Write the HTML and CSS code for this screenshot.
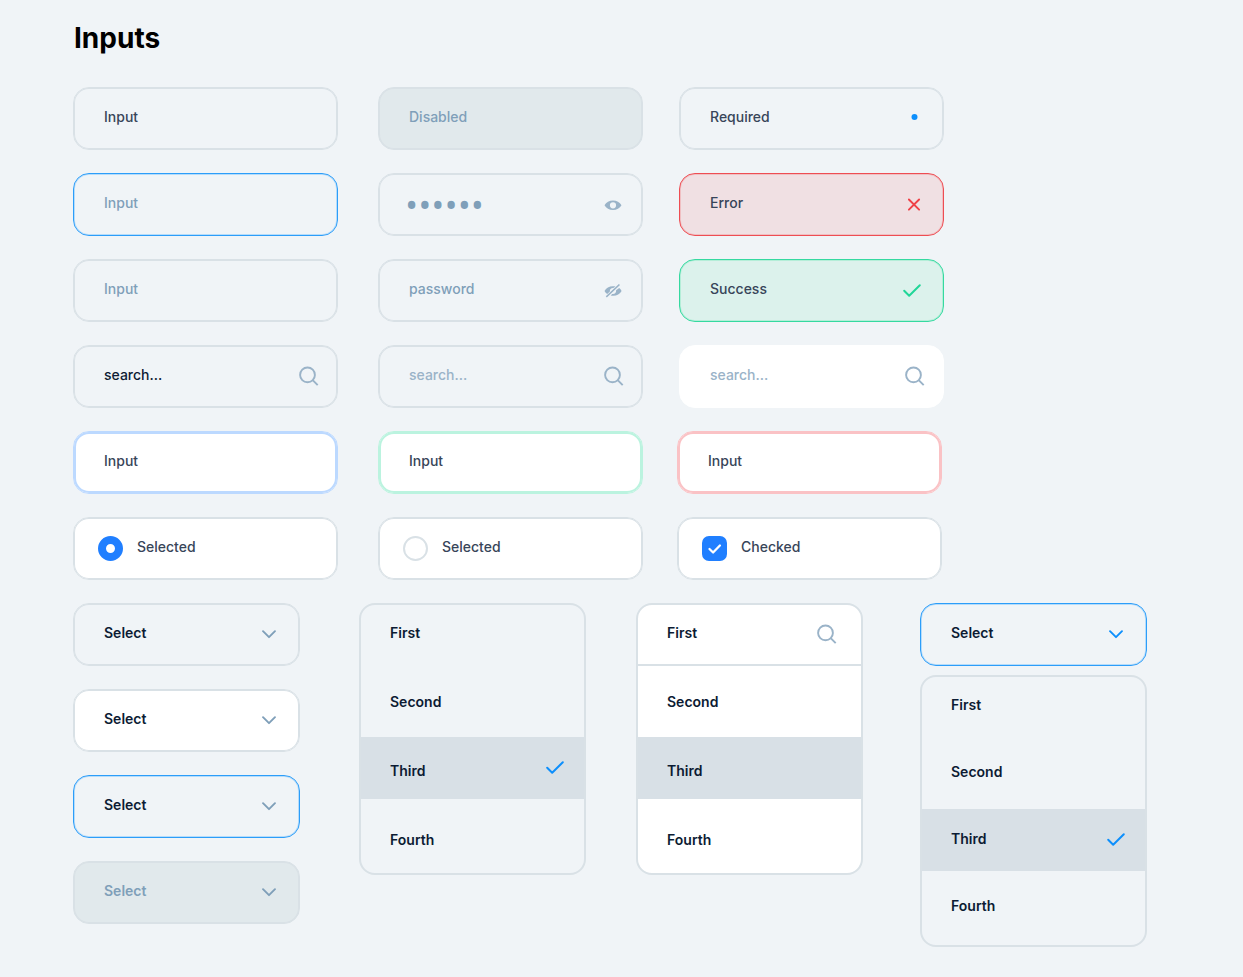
FILE: index.html
```html
<!DOCTYPE html>
<html lang="en">
<head>
<meta charset="utf-8">
<meta name="viewport" content="width=device-width, initial-scale=1">
<title>Inputs</title>
<link rel="stylesheet" href="styles.css">
</head>
<body>
<svg class="sprite" aria-hidden="true">
  <symbol id="search" viewBox="0 0 24 24"><circle cx="11.500" cy="9.900" r="7.400" fill="none" stroke="currentColor" stroke-width="1.900"/><path d="M16.700 15.100l5 5" fill="none" stroke="currentColor" stroke-width="1.900"/></symbol>
  <symbol id="eye" viewBox="0 0 24 24"><path fill="currentColor" fill-rule="evenodd" d="M3.500 12.300C5.200 9.200 8.300 7.500 12 7.500s6.800 1.700 8.500 4.800c-1.700 3.100-4.800 4.800-8.500 4.800S5.200 15.400 3.500 12.300zM12 9.200a3.100 3.100 0 1 0 0 6.200 3.100 3.100 0 0 0 0-6.200z"/></symbol>
  <symbol id="eye-off" viewBox="0 0 24 24"><path fill="currentColor" d="M14.500 7.500C9.800 6.400 5.500 8.200 3.500 12c.7 1.300 1.600 2.300 2.700 3.100l2.700-2.700c-.3-2.200 1.300-3.700 3.400-3.500zM18.200 9.100c1 .7 1.800 1.700 2.400 2.900-2 3.800-6.200 5.500-10.900 4.500l1.500-1.500c2.500.4 4.200-1.400 3.900-3.700zM17.900 5.100l1.100 1-13.200 12.300-1-1.100z"/><path d="M10.300 13.300l3.500-3.500" stroke="currentColor" stroke-width="1"/></symbol>
  <symbol id="cross" viewBox="0 0 24 24"><path d="M6.900 6.500l10.200 10.200M17.100 6.500L6.900 16.700" fill="none" stroke="currentColor" stroke-width="1.900" stroke-linecap="round"/></symbol>
  <symbol id="check" viewBox="0 0 24 24"><path d="M2.200 11.700l5 5L17.800 6.200" fill="none" stroke="currentColor" stroke-width="2" stroke-linecap="round" stroke-linejoin="round"/></symbol>
  <symbol id="dot" viewBox="0 0 24 24"><circle cx="12.500" cy="10" r="3" fill="currentColor"/></symbol>
  <symbol id="chevron" viewBox="0 0 24 24"><path d="M6 9.200l6 6 6-6" fill="none" stroke="currentColor" stroke-width="1.900" stroke-linecap="round" stroke-linejoin="round"/></symbol>
</svg>

<main class="page">
  <h1 class="title">Inputs</h1>

  <div class="fields">
    <div class="field"><input class="control" type="text" value="Input" aria-label="Default"></div>
    <div class="field field--disabled"><input class="control" type="text" placeholder="Disabled" aria-label="Disabled" disabled></div>
    <div class="field"><input class="control" type="text" value="Required" aria-label="Required" required><svg class="icon icon--blue"><use href="#dot"/></svg></div>

    <div class="field field--focus"><input class="control" type="text" placeholder="Input" aria-label="Focused"></div>
    <div class="field"><input class="control control--password" type="password" value="secret" aria-label="Hidden password"><button class="icon-button" type="button" aria-label="Show password"><svg class="icon"><use href="#eye"/></svg></button></div>
    <div class="field field--error"><input class="control" type="text" value="Error" aria-label="Error" aria-invalid="true"><svg class="icon icon--red"><use href="#cross"/></svg></div>

    <div class="field"><input class="control" type="text" placeholder="Input" aria-label="Empty"></div>
    <div class="field"><input class="control" type="text" placeholder="password" aria-label="Visible password"><button class="icon-button" type="button" aria-label="Hide password"><svg class="icon"><use href="#eye-off"/></svg></button></div>
    <div class="field field--success"><input class="control" type="text" value="Success" aria-label="Success"><svg class="icon icon--green"><use href="#check"/></svg></div>

    <div class="field"><input class="control control--dark" type="text" value="search..." aria-label="Search"><svg class="icon"><use href="#search"/></svg></div>
    <div class="field field--search"><input class="control" type="text" placeholder="search..." aria-label="Search, outlined"><svg class="icon"><use href="#search"/></svg></div>
    <div class="field field--search field--white field--plain"><input class="control" type="text" placeholder="search..." aria-label="Search, filled"><svg class="icon"><use href="#search"/></svg></div>
  </div>

  <div class="fields fields--filled">
    <div class="field field--white field--ring-blue"><input class="control" type="text" value="Input" aria-label="Blue ring"></div>
    <div class="field field--white field--ring-green"><input class="control" type="text" value="Input" aria-label="Green ring"></div>
    <div class="field field--white field--ring-red"><input class="control" type="text" value="Input" aria-label="Red ring"></div>

    <label class="field field--white field--choice"><input class="radio" type="radio" name="choice" checked><span class="choice-text">Selected</span></label>
    <label class="field field--white field--choice"><input class="radio" type="radio" name="choice"><span class="choice-text">Selected</span></label>
    <label class="field field--white field--choice"><span class="checkbox-wrap"><input class="checkbox" type="checkbox" checked><svg class="tick" viewBox="0 0 25 25"><path d="M7.500 13l3.600 3.500 6.800-7" fill="none" stroke="currentColor" stroke-width="2.300" stroke-linecap="round" stroke-linejoin="round"/></svg></span><span class="choice-text">Checked</span></label>
  </div>

  <div class="menus">
    <div class="stack">
      <div class="field field--select"><select class="control control--dark" aria-label="Select, outlined"><option>Select</option></select><svg class="icon chevron"><use href="#chevron"/></svg></div>
      <div class="field field--select field--white"><select class="control control--dark" aria-label="Select, filled"><option>Select</option></select><svg class="icon chevron"><use href="#chevron"/></svg></div>
      <div class="field field--select field--focus"><select class="control control--dark" aria-label="Select, focused"><option>Select</option></select><svg class="icon chevron"><use href="#chevron"/></svg></div>
      <div class="field field--select field--disabled"><select class="control" aria-label="Select, disabled" disabled><option>Select</option></select><svg class="icon chevron"><use href="#chevron"/></svg></div>
    </div>

    <div class="list" role="listbox" aria-label="Options">
      <button class="option" type="button" role="option" aria-selected="false"><span class="option-text">First</span></button>
      <button class="option" type="button" role="option" aria-selected="false"><span class="option-text">Second</span></button>
      <button class="option option--active" type="button" role="option" aria-selected="true"><span class="option-text">Third</span><svg class="icon icon--blue"><use href="#check"/></svg></button>
      <button class="option" type="button" role="option" aria-selected="false"><span class="option-text">Fourth</span></button>
    </div>

    <div class="list list--white">
      <div class="list-search"><input class="control control--dark" type="text" value="First" aria-label="Search options"><svg class="icon"><use href="#search"/></svg></div>
      <button class="option" type="button"><span class="option-text">Second</span></button>
      <button class="option option--active" type="button"><span class="option-text">Third</span></button>
      <button class="option" type="button"><span class="option-text">Fourth</span></button>
    </div>

    <div class="dropdown">
      <div class="field field--select field--focus"><select class="control control--dark" aria-label="Select, open"><option>Select</option></select><svg class="icon icon--blue chevron"><use href="#chevron"/></svg></div>
      <div class="list list--compact" role="listbox" aria-label="Open options">
        <button class="option" type="button" role="option" aria-selected="false"><span class="option-text">First</span></button>
        <button class="option" type="button" role="option" aria-selected="false"><span class="option-text">Second</span></button>
        <button class="option option--active" type="button" role="option" aria-selected="true"><span class="option-text">Third</span><svg class="icon icon--blue"><use href="#check"/></svg></button>
        <button class="option" type="button" role="option" aria-selected="false"><span class="option-text">Fourth</span></button>
      </div>
    </div>
  </div>
</main>
</body>
</html>
```

FILE: styles.css
```css
:root {
  --bg: #f0f4f7;
  --line: #d9e1e6;
  --text: #384559;
  --dark: #0c1b33;
  --muted: #7f9fb9;
  --soft: #9ab3c8;
  --blue: #0d8ffc;
}

* { box-sizing: border-box; }

body {
  margin: 0;
  background: var(--bg);
  color: var(--text);
  font: 500 14px/20px Inter, "Liberation Sans", sans-serif;
}

.sprite {
  position: absolute;
  width: 0;
  height: 0;
}

.page { padding: 20px 24px 30px 73px; }

.title {
  margin: 0 0 31px 1px;
  color: #000;
  font-size: 28px;
  font-weight: 700;
  line-height: 36px;
}

.fields {
  display: grid;
  grid-template-columns: 281fr 277fr 265fr;
  gap: 23px 24px;
  max-width: 871px;
  margin-bottom: 23px;
}

.fields--filled {
  grid-template-columns: 281fr 275fr 265fr;
  max-width: 869px;
}

.field {
  position: relative;
  display: flex;
  align-items: center;
  width: 100%;
  max-width: 265px;
  height: 63px;
  padding-right: 17px;
  border: 1px solid var(--line);
  border-radius: 16px;
  box-shadow: inset 0 0 0 1px var(--line);
}

.field--white { background: #fff; }
.field--plain { border-color: #fff; box-shadow: none; }
.field--disabled { background: #e1e9ec; }
.field--focus { border-color: #2c9df9; box-shadow: inset 0 0 0 1px #b5dcfa; }
.field--error { background: #f0e0e3; border-color: #ee4d53; box-shadow: inset 0 0 0 1px #f0bfc2; }
.field--success { background: #dcf2ec; border-color: #35d9a0; box-shadow: inset 0 0 0 1px #b4eed8; }
.field--ring-blue { border-color: #bcd9ff; box-shadow: inset 0 0 0 2px #bcd9ff; }
.field--ring-green { border-color: #bbf3df; box-shadow: inset 0 0 0 2px #bbf3df; }
.field--ring-red { border-color: #fac2c5; box-shadow: inset 0 0 0 2px #fac2c5; }

.control {
  flex: 1;
  min-width: 0;
  height: 100%;
  margin: 0;
  padding: 0 0 4px 30px;
  border: 0;
  outline: 0;
  background: none;
  color: var(--text);
  font: inherit;
  opacity: 1;
  appearance: none;
}

.control::placeholder { color: var(--muted); opacity: 1; }
.control:disabled { color: var(--muted); }
.control--dark { color: var(--dark); }
.field--search .control::placeholder { color: var(--soft); }

.control--password {
  padding: 0 0 0 26px;
  color: var(--muted);
  font-family: "Open Sans", sans-serif;
  font-size: 35px;
}

.icon {
  display: block;
  flex: none;
  width: 24px;
  height: 24px;
  color: var(--soft);
}

.icon--blue { color: var(--blue); }
.icon--red { color: #ef4046; }
.icon--green { color: #21d698; }

.icon-button {
  flex: none;
  padding: 0;
  border: 0;
  background: none;
}

.field--choice {
  gap: 14px;
  padding-left: 24px;
}

.choice-text { padding-bottom: 4px; }

.radio,
.checkbox {
  display: block;
  flex: none;
  width: 25px;
  height: 25px;
  margin: 0;
  appearance: none;
}

.radio {
  border: 2px solid var(--line);
  border-radius: 50%;
}

.radio:checked { border: 8px solid #207fff; }

.checkbox-wrap {
  position: relative;
  flex: none;
}

.checkbox {
  border: 2px solid var(--line);
  border-radius: 7px;
}

.checkbox:checked { border-color: #207fff; background: #207fff; }

.tick {
  position: absolute;
  inset: 0;
  width: 25px;
  height: 25px;
  color: #fff;
  pointer-events: none;
}

.menus {
  display: grid;
  grid-template-columns: 262fr 253fr 260fr 227fr;
  align-items: start;
  column-gap: 24px;
  max-width: 1074px;
  font-weight: 600;
}

.stack {
  display: grid;
  gap: 23px;
}

.dropdown {
  display: grid;
  gap: 9px;
}

.field--select {
  max-width: 227px;
  padding-right: 0;
}

.chevron {
  position: absolute;
  top: 18px;
  right: 18px;
  pointer-events: none;
}

.chevron:not(.icon--blue) { color: var(--muted); }

.list {
  display: flex;
  flex-direction: column;
  gap: 7px;
  width: 100%;
  max-width: 227px;
  padding-bottom: 5px;
  border: 2px solid var(--line);
  border-radius: 16px;
  overflow: hidden;
}

.list--white { background: #fff; }

.option {
  display: flex;
  align-items: center;
  justify-content: space-between;
  width: 100%;
  height: 62px;
  padding: 0 15px 0 29px;
  border: 0;
  background: none;
  color: var(--dark);
  font: inherit;
  text-align: left;
}

.option-text { padding-top: 5px; }
.option--active { background: #d8e0e6; }
.option:first-child { height: 56px; }
.option:first-child .option-text { padding-top: 0; }

.list-search {
  display: flex;
  align-items: center;
  height: 61px;
  margin-bottom: -5px;
  padding-right: 23px;
  border-bottom: 2px solid var(--line);
}

.list-search .control { padding: 0 0 4px 29px; }

.list--compact {
  gap: 5px;
  padding-bottom: 7px;
}

.list--compact .option-text { padding: 0 0 3px; }
.list--compact .option:first-child { height: 60px; }
.list--compact .option:first-child .option-text { padding: 0 0 5px; }
```
